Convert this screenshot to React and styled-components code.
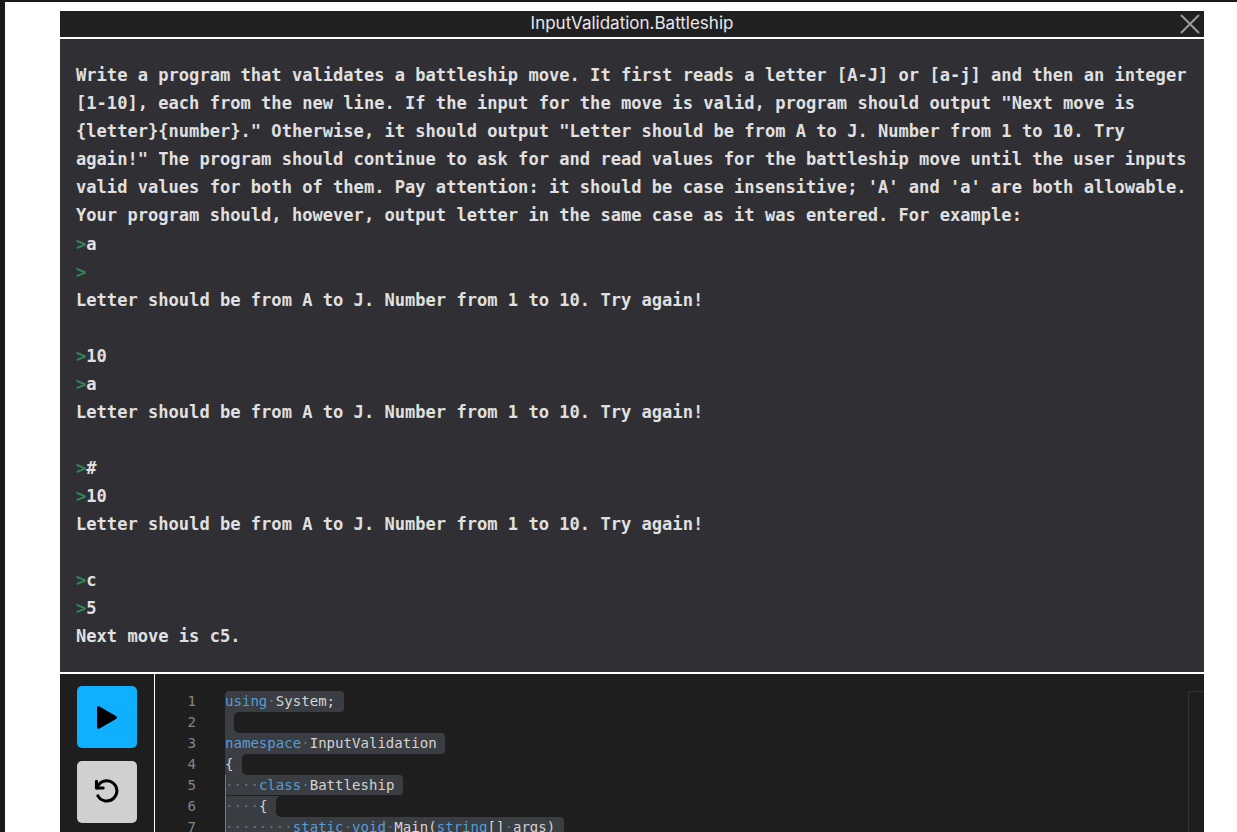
import styled, { createGlobalStyle } from 'styled-components';

const GlobalStyle = createGlobalStyle`
  html, body {
    margin: 0;
    height: 100%;
    background: #ffffff;
    overflow: hidden;
  }
`;

const Page = styled.div`
  height: 832px;
  box-sizing: border-box;
  border-top: 2px solid #1a1a1a;
  border-left: 5px solid #1a1a1a;
  padding: 9px 33px 0 55px;
  overflow: hidden;
`;

const Header = styled.header`
  height: 26px;
  background: #202023;
  color: #e8e8e8;
  font-family: 'Inter', sans-serif;
  font-size: 17px;
  line-height: 25px;
  text-align: center;
  position: relative;
`;

const CloseButton = styled.button`
  position: absolute;
  right: 3px;
  top: 3px;
  width: 21px;
  height: 21px;
  padding: 0;
  border: 0;
  background: none;
  color: #9c9c9c;
`;

const Task = styled.section`
  height: 633px;
  box-sizing: border-box;
  margin-top: 2px;
  padding: 22px 0 0 16px;
  background: #2f2f34;
  color: #e0e0e0;
  font-family: 'DejaVu Sans Mono', monospace;
  font-weight: 700;
  font-size: 17.08px;
  line-height: 28px;
`;

const Paragraph = styled.div`
  margin-bottom: 1px;
`;

const TextLine = styled.div`
  height: 28px;
  white-space: pre;
`;

const Prompt = styled.span`
  color: #2e8b57;
`;

const Editor = styled.section`
  height: 160px;
  margin-top: 2px;
  background: #1e1e1e;
  display: flex;
`;

const Sidebar = styled.aside`
  width: 95px;
  flex: none;
  box-sizing: border-box;
  padding: 12px 0 0 17px;
  border-right: 1px solid #ffffff;
  display: flex;
  flex-direction: column;
  gap: 13px;
`;

const ActionButton = styled.button`
  width: 60px;
  height: 62px;
  flex: none;
  padding: 0;
  border: 0;
  border-radius: 5px;
  background: ${(props) => props.$bg};
  color: #000000;
  display: flex;
  align-items: center;
  justify-content: center;
`;

const CodeArea = styled.div`
  flex: 1;
  display: flex;
  padding-top: 17px;
  position: relative;
  font-family: 'DejaVu Sans Mono', monospace;
  font-size: 14.07px;
  line-height: 21px;
`;

const Numbers = styled.div`
  width: 70px;
  flex: none;
  box-sizing: border-box;
  padding-right: 29px;
  text-align: right;
  color: #858585;
`;

const Lines = styled.div`
  flex: 1;
`;

const CodeRow = styled.div`
  height: 21px;
  display: flex;
  white-space: pre;
  color: #d4d4d4;
`;

const Selected = styled.span`
  display: block;
  height: 21px;
  background: #3a3d41;
  border-radius: ${(props) => props.$radius || '0 4px 4px 0'};
  box-shadow: ${(props) => props.$shadow || 'none'};
`;

// the notch the selection leaves on a short line, rounded against the lines around it
const Gap = styled.span`
  display: block;
  flex: 1;
  height: 21px;
  margin-left: -8px;
  position: relative;
  background: #1e1e1e;
  border-radius: 5px 0 0 5px;
`;

const Keyword = styled.span`
  color: #569cd6;
`;

const Dot = styled.span`
  color: #5f7486;
`;

const Minimap = styled.div`
  position: absolute;
  right: 0;
  top: 17px;
  bottom: 0;
  width: 15px;
  border-top: 1px solid #333333;
  border-left: 1px solid #333333;
`;

const paragraph = [
  'Write a program that validates a battleship move. It first reads a letter [A-J] or [a-j] and then an integer',
  '[1-10], each from the new line. If the input for the move is valid, program should output "Next move is',
  '{letter}{number}." Otherwise, it should output "Letter should be from A to J. Number from 1 to 10. Try',
  'again!" The program should continue to ask for and read values for the battleship move until the user inputs',
  "valid values for both of them. Pay attention: it should be case insensitive; 'A' and 'a' are both allowable.",
  'Your program should, however, output letter in the same case as it was entered. For example:',
];

const retry = 'Letter should be from A to J. Number from 1 to 10. Try again!';

const example = [
  '>a',
  '>',
  retry,
  '',
  '>10',
  '>a',
  retry,
  '',
  '>#',
  '>10',
  retry,
  '',
  '>c',
  '>5',
  'Next move is c5.',
];

const guide = 'inset 1px 0 #77797c';

const PlayIcon = () => (
  <svg width="22" height="25" viewBox="0 0 22 25">
    <path d="M1 3v19c0 1.500 1.300 2.200 2.500 1.500L20 14c1.300-.8 1.300-2.200 0-3L3.500 1.500C2.300.8 1 1.500 1 3z" fill="currentColor" />
  </svg>
);

const UndoIcon = () => (
  <svg width="27" height="27" viewBox="0.8 1 24 24" fill="none" stroke="currentColor" strokeWidth="2.7" strokeLinecap="round" strokeLinejoin="round">
    <path d="M3 3v6h6" />
    <path d="M3.500 9a9 9 0 1 1 .8 7" />
  </svg>
);

const CloseIcon = () => (
  <svg width="21" height="21" viewBox="0 0 21 21" stroke="currentColor" strokeWidth="2">
    <path d="M1 1l18 18M19 1L1 19" />
  </svg>
);

const App = () => {
  return (
    <>
      <GlobalStyle />
      <Page>
        <Header>
          InputValidation.Battleship
          <CloseButton>
            <CloseIcon />
          </CloseButton>
        </Header>
        <Task>
          <Paragraph>
            {paragraph.map((line) => (
              <TextLine key={line}>{line}</TextLine>
            ))}
          </Paragraph>
          {example.map((line, i) => (
            <TextLine key={i}>
              {line.startsWith('>') ? (
                <>
                  <Prompt>&gt;</Prompt>
                  {line.slice(1)}
                </>
              ) : (
                line
              )}
            </TextLine>
          ))}
        </Task>
        <Editor>
          <Sidebar>
            <ActionButton $bg="#0fb0ff">
              <PlayIcon />
            </ActionButton>
            <ActionButton $bg="#d0d0d0">
              <UndoIcon />
            </ActionButton>
          </Sidebar>
          <CodeArea>
            <Numbers>
              {[1, 2, 3, 4, 5, 6, 7].map((n) => (
                <div key={n}>{n}</div>
              ))}
            </Numbers>
            <Lines>
              <CodeRow>
                <Selected $radius="4px 4px 4px 0">
                  <Keyword>using</Keyword>
                  <Dot>·</Dot>System;{' '}
                </Selected>
              </CodeRow>
              <CodeRow>
                <Selected $radius="0">{'  '}</Selected>
                <Gap />
              </CodeRow>
              <CodeRow>
                <Selected>
                  <Keyword>namespace</Keyword>
                  <Dot>·</Dot>InputValidation{' '}
                </Selected>
              </CodeRow>
              <CodeRow>
                <Selected $radius="0">{'{  '}</Selected>
                <Gap />
              </CodeRow>
              <CodeRow>
                <Selected $shadow={`${guide}, inset 0 -1px #1e1e1e`}>
                  <Dot>····</Dot>
                  <Keyword>class</Keyword>
                  <Dot>·</Dot>Battleship{' '}
                </Selected>
              </CodeRow>
              <CodeRow>
                <Selected $radius="0" $shadow={guide}>
                  <Dot>····</Dot>
                  {'{  '}
                </Selected>
                <Gap />
              </CodeRow>
              <CodeRow>
                <Selected $shadow={guide}>
                  <Dot>········</Dot>
                  <Keyword>static</Keyword>
                  <Dot>·</Dot>
                  <Keyword>void</Keyword>
                  <Dot>·</Dot>Main(<Keyword>string</Keyword>[]<Dot>·</Dot>args){' '}
                </Selected>
              </CodeRow>
            </Lines>
            <Minimap />
          </CodeArea>
        </Editor>
      </Page>
    </>
  );
};

export default App;
